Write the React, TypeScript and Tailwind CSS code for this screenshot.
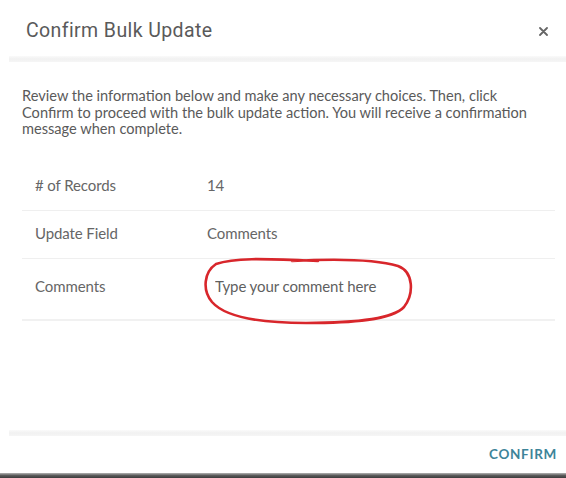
import React from "react";

type DetailRow = {
  label: string;
  value?: string;
};

const rows: DetailRow[] = [
  { label: "# of Records", value: "14" },
  { label: "Update Field", value: "Comments" },
];

function Divider({ className = "" }: { className?: string }) {
  return <div className={`h-[6px] bg-gradient-to-b from-[#fafafa] via-[#f1f1f1] to-[#f6f6f6] ${className}`} />;
}

// freehand marker loop drawn around the comment input
function MarkerLoop() {
  return (
    <svg className="pointer-events-none absolute inset-0" width="566" height="478" viewBox="0 0 566 478">
      <path
        d="M292 261 C330 259 374 259 398 266 C414 272 414 294 404 307 C392 320 352 323 306 323 C262 323 226 318 212 302 C202 290 204 272 216 264 C236 257 268 259 318 261"
        fill="none"
        stroke="#d8262b"
        strokeWidth="2.6"
        strokeLinecap="round"
        strokeLinejoin="round"
      />
    </svg>
  );
}

export default function App() {
  return (
    <div className="relative flex h-[478px] w-[566px] flex-col overflow-hidden bg-white font-['Lato',sans-serif] text-[#555]">
      <header className="flex h-[56px] items-center justify-between pl-[26px] pr-[17px] pt-[6px]">
        <h2 className="font-['Roboto',sans-serif] text-[19.5px] tracking-[0.4px] text-[#5a5a5a]">Confirm Bulk Update</h2>
        <button className="flex h-[12px] w-[12px] items-center justify-center text-[#666]">
          <svg width="9" height="9" viewBox="0 0 9 9">
            <path d="M1 1 L8 8 M8 1 L1 8" stroke="currentColor" strokeWidth="1.8" strokeLinecap="round" />
          </svg>
        </button>
      </header>
      <Divider className="ml-[9px]" />

      <section className="flex-1 pl-[22px] pr-[14px] pt-[26px]">
        <p className="text-[14.6px] leading-[16.5px] tracking-[0px] text-[#5a5a5a]">
          Review the information below and make any necessary choices. Then, click
          <br />
          Confirm to proceed with the bulk update action. You will receive a confirmation message when complete.
        </p>

        <dl className="mr-[-3px] mt-[25px] text-[15px] tracking-[-0.1px]">
          {rows.map((row) => (
            <div key={row.label} className="flex h-[48px] items-center border-b border-[#efefef] pl-[13px] pb-[2px]">
              <dt className="w-[172px] text-[#666]">{row.label}</dt>
              <dd className="text-[#666]">{row.value}</dd>
            </div>
          ))}
          <div className="flex h-[62px] items-start border-b-2 border-[#f1f1f1] pl-[13px] pt-[16px]">
            <dt className="w-[172px] text-[#666]">Comments</dt>
            <dd className="pl-[8px]">
              <input
                className="w-[190px] bg-transparent text-[#555] outline-none placeholder:text-[#5f5f5f]"
                placeholder="Type your comment here"
              />
            </dd>
          </div>
        </dl>
      </section>

      <Divider className="ml-[9px]" />
      <footer className="flex h-[37px] items-center justify-end pr-[9px]">
        <button className="text-[13.5px] font-bold tracking-[0.7px] text-[#3d8499]">CONFIRM</button>
      </footer>
      <div className="h-[5px] bg-gradient-to-b from-[#b5b5b5] via-[#5a5a5a] to-[#3c3c3c]" />

      <MarkerLoop />
    </div>
  );
}
